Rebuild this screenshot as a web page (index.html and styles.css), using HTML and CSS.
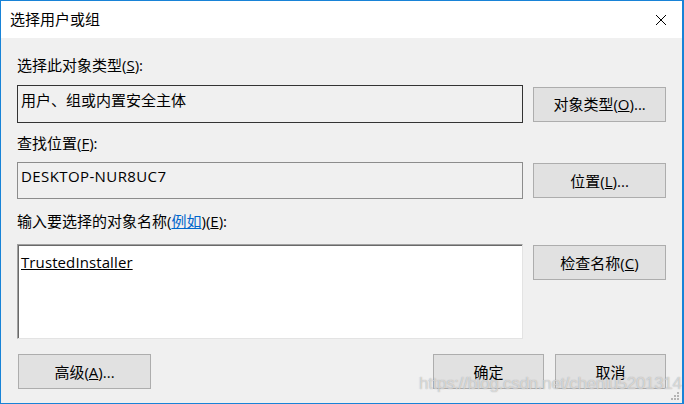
FILE: index.html
```html
<!DOCTYPE html>
<html lang="zh-CN">
<head>
    <meta charset="UTF-8">
    <title>选择用户或组</title>
    <link rel="stylesheet" href="styles.css">
</head>
<body>
    <div class="window">
        <div class="titlebar">
            <span class="title">选择用户或组</span>
            <svg class="close" width="12" height="12" viewBox="0 0 12 12">
                <path d="M1 1 L11 11 M11 1 L1 11" stroke="#000" stroke-width="1" fill="none"/>
            </svg>
        </div>

        <div class="content">
            <div class="label">选择此对象类型(<u>S</u>):</div>
            <div class="row row-types">
                <div class="field field-types">用户、组或内置安全主体</div>
                <button class="btn">对象类型(<u>O</u>)...</button>
            </div>

            <div class="label label-location">查找位置(<u>F</u>):</div>
            <div class="row row-location">
                <div class="field field-location">DESKTOP-NUR8UC7</div>
                <button class="btn">位置(<u>L</u>)...</button>
            </div>

            <div class="label label-names">输入要选择的对象名称(<a href="#" class="link">例如</a>)(<u>E</u>):</div>
            <div class="row row-names">
                <div class="names"><u>TrustedInstaller</u></div>
                <button class="btn btn-check">检查名称(<u>C</u>)</button>
            </div>

            <div class="footer">
                <button class="btn">高级(<u>A</u>)...</button>
                <div class="spacer"></div>
                <button class="btn btn-small">确定</button>
                <button class="btn btn-small">取消</button>
            </div>
        </div>

        <!-- 水印 -->
        <div class="watermark">https://blog.csdn.net/chenlu5201314</div>

        <svg class="grip" width="9" height="9" viewBox="0 0 9 9">
            <rect x="6" y="0" width="2" height="2" fill="#b4b4b4"/>
            <rect x="3" y="3" width="2" height="2" fill="#b4b4b4"/>
            <rect x="6" y="3" width="2" height="2" fill="#b4b4b4"/>
            <rect x="0" y="6" width="2" height="2" fill="#b4b4b4"/>
            <rect x="3" y="6" width="2" height="2" fill="#b4b4b4"/>
            <rect x="6" y="6" width="2" height="2" fill="#b4b4b4"/>
        </svg>
    </div>
</body>
</html>
```

FILE: styles.css
```css
* {
    box-sizing: border-box;
}

body {
    margin: 0;
    font-family: "Open Sans", "Noto Sans CJK SC", sans-serif;
    font-size: 15px;
    color: #000000;
}

.window {
    position: relative;
    width: 684px;
    height: 404px;
    border: 1px solid #1883d7;
    border-right-width: 2px;
    background-color: #f0f0f0;
    overflow: hidden;
}

.titlebar {
    height: 37px;
    background-color: #ffffff;
    display: flex;
    align-items: center;
    justify-content: space-between;
    padding: 0 15px 0 9px;
}

.title {
    line-height: 20px;
    margin-top: -1px;
}

.close {
    display: block;
    margin-top: 1px;
}

.content {
    padding: 17px 16px 0 16px;
}

.label {
    line-height: 20px;
    height: 20px;
}

.label-location {
    margin-top: 10px;
}

.label-names {
    margin-top: 12px;
}

.link {
    color: #0066cc;
    text-decoration: underline;
}

.row {
    display: flex;
    align-items: center;
    gap: 10px;
    margin-top: 10px;
}

.row-location {
    margin-top: 9px;
}

.row-names {
    align-items: flex-start;
    margin-top: 13px;
}

.field {
    width: 507px;
    line-height: 20px;
    padding-left: 3px;
    white-space: nowrap;
}

.field-types {
    height: 38px;
    border: 1px solid #333333;
    padding-top: 4px;
}

.field-location {
    height: 37px;
    border: 1px solid #8c8c8c;
    padding-top: 3px;
    letter-spacing: 0.4px;
}

.names {
    width: 506px;
    height: 95px;
    background-color: #ffffff;
    border-top: 1px solid #a0a0a0;
    border-left: 1px solid #a0a0a0;
    border-right: 1px solid #e3e3e3;
    border-bottom: 1px solid #e3e3e3;
    box-shadow: inset 1px 1px 0 #696969;
    line-height: 20px;
    padding: 7px 3px 0 3px;
    letter-spacing: 0.1px;
}

.btn {
    width: 133px;
    height: 35px;
    font-family: inherit;
    font-size: 15px;
    color: #000000;
    background-color: #e1e1e1;
    border: 1px solid #adadad;
    padding: 0;
    margin: 0;
    line-height: 20px;
}

.btn-check {
    margin-top: 1px;
}

.footer {
    display: flex;
    margin-top: 15px;
    gap: 11px;
}

.footer .btn:first-child {
    margin-left: 1px;
}

.spacer {
    flex: 1;
}

.btn-small {
    width: 111px;
}

.watermark {
    position: absolute;
    left: 418px;
    top: 373px;
    font-family: "Liberation Sans", sans-serif;
    font-size: 17px;
    letter-spacing: -0.3px;
    color: rgba(255, 255, 255, 0.55);
    text-shadow: 0 0 1px rgba(120, 120, 120, 0.7);
}

.grip {
    position: absolute;
    right: 2px;
    bottom: 2px;
}
```
